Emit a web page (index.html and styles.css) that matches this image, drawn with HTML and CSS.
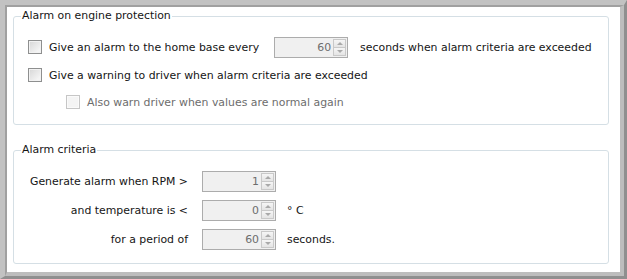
FILE: index.html
```html
<!DOCTYPE html>
<html lang="en">
<head>
    <meta charset="UTF-8">
    <title>Engine protection alarm</title>
    <link rel="stylesheet" href="styles.css">
</head>
<body>
    <div class="frame">
        <div class="frame-inner">

            <!-- Alarm on engine protection -->
            <fieldset class="group group-alarm">
                <legend>Alarm on engine protection</legend>

                <div class="row">
                    <span class="check"></span>
                    <span class="label">Give an alarm to the home base every</span>
                    <div class="spin spin-base">
                        <span class="spin-value">60</span>
                        <span class="spin-buttons">
                            <span class="spin-btn up"></span>
                            <span class="spin-btn down"></span>
                        </span>
                    </div>
                    <span class="label after-spin">seconds when alarm criteria are exceeded</span>
                </div>

                <div class="row">
                    <span class="check"></span>
                    <span class="label">Give a warning to driver when alarm criteria are exceeded</span>
                </div>

                <div class="row row-sub">
                    <span class="check disabled"></span>
                    <span class="label disabled">Also warn driver when values are normal again</span>
                </div>
            </fieldset>

            <!-- Alarm criteria -->
            <fieldset class="group group-criteria">
                <legend>Alarm criteria</legend>

                <div class="criteria">
                    <span class="crit-label">Generate alarm when RPM &gt;</span>
                    <div class="spin">
                        <span class="spin-value">1</span>
                        <span class="spin-buttons">
                            <span class="spin-btn up"></span>
                            <span class="spin-btn down"></span>
                        </span>
                    </div>
                    <span class="unit"></span>

                    <span class="crit-label">and temperature is &lt;</span>
                    <div class="spin">
                        <span class="spin-value">0</span>
                        <span class="spin-buttons">
                            <span class="spin-btn up"></span>
                            <span class="spin-btn down"></span>
                        </span>
                    </div>
                    <span class="unit">° C</span>

                    <span class="crit-label">for a period of</span>
                    <div class="spin">
                        <span class="spin-value">60</span>
                        <span class="spin-buttons">
                            <span class="spin-btn up"></span>
                            <span class="spin-btn down"></span>
                        </span>
                    </div>
                    <span class="unit">seconds.</span>
                </div>
            </fieldset>

        </div>
    </div>
</body>
</html>
```

FILE: styles.css
```css
body {
    margin: 0;
    background: #ffffff;
    font-family: "DejaVu Sans", Verdana, sans-serif;
    font-size: 10.9px;
    color: #151515;
}

/* 3d window frame */
.frame {
    width: 627px;
    height: 279px;
    box-sizing: border-box;
    border-style: solid;
    border-width: 5px 3px 3px 5px;
    border-color: #c2c2c2 #8f8f8f #8f8f8f #c2c2c2;
}

.frame-inner {
    height: 100%;
    box-sizing: border-box;
    background: #ffffff;
    border-style: solid;
    border-width: 2px 4px 4px 2px;
    border-color: #a0a0a0 #bdbdbd #bdbdbd #a0a0a0;
    padding: 2px 11px 0 6px;
}

/* group boxes */
.group {
    margin: 0;
    padding: 10px 14px 9px 0;
    border: 1px solid #d5dfe5;
    border-radius: 3px;
}

.group legend {
    margin-left: 7px;
    padding: 0 1px;
    line-height: 14px;
    color: #151515;
}

.group-criteria {
    margin-top: 18px;
}

/* checkbox rows */
.row {
    display: flex;
    align-items: center;
    height: 28px;
    padding-left: 14px;
}

.row-sub {
    height: 26px;
    padding-left: 52px;
}

.check {
    width: 12px;
    height: 12px;
    border: 1px solid #8e8f8f;
    background: linear-gradient(135deg, #d6d6d6 0%, #f4f4f4 80%);
    box-shadow: inset 0 0 0 1px #f2f2f2;
    margin-right: 7px;
    flex: none;
}

.check.disabled {
    border-color: #c6c6c6;
    background: #f4f4f4;
    box-shadow: inset 0 0 0 1px #fafafa;
}

.label {
    white-space: nowrap;
}

.label.disabled {
    color: #6d6d6d;
}

.spin-base {
    margin-left: 15px;
}

.after-spin {
    margin-left: 12px;
}

/* spin boxes */
.spin {
    width: 74px;
    height: 21px;
    box-sizing: border-box;
    border: 1px solid #acacac;
    background: #f0f0f0;
    display: flex;
    align-items: center;
    justify-content: flex-end;
}

.spin-value {
    color: #6d6d6d;
    padding-right: 2px;
}

.spin-buttons {
    width: 13px;
    height: 17px;
    display: flex;
    flex-direction: column;
    margin-right: 1px;
}

.spin-btn {
    flex: 1;
    border: 1px solid #c9c9c9;
    background: linear-gradient(#f6f6f6, #e4e4e4);
    position: relative;
}

.spin-btn.down {
    border-top: none;
}

.spin-btn::after {
    content: '';
    position: absolute;
    left: 3px;
    border-left: 3px solid transparent;
    border-right: 3px solid transparent;
}

.spin-btn.up::after {
    top: 2px;
    border-bottom: 3px solid #a9a9a9;
}

.spin-btn.down::after {
    top: 2px;
    border-top: 3px solid #a9a9a9;
}

/* alarm criteria grid */
.criteria {
    display: grid;
    grid-template-columns: 174px 74px auto;
    grid-auto-rows: 29px;
    align-items: center;
    column-gap: 14px;
}

.crit-label {
    text-align: right;
    white-space: nowrap;
}

.unit {
    margin-left: -3px;
}
```
